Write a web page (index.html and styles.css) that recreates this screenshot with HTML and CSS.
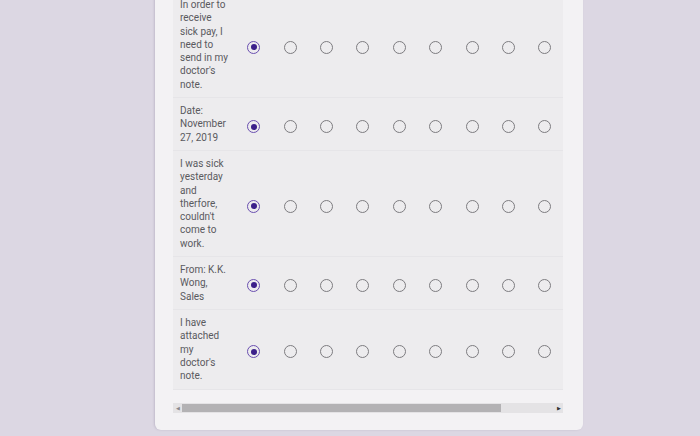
FILE: index.html
```html
<!DOCTYPE html>
<html lang="en">
<head>
    <meta charset="UTF-8">
    <title>Grid question</title>
    <link rel="stylesheet" href="styles.css">
</head>
<body>
    <div class="card">
        <div class="grid">
            <div class="row">
                <div class="label">In order to<br>receive<br>sick pay, I<br>need to<br>send in my<br>doctor's<br>note.</div>
                <div class="radios">
                    <span class="radio on"></span><span class="radio"></span><span class="radio"></span>
                    <span class="radio"></span><span class="radio"></span><span class="radio"></span>
                    <span class="radio"></span><span class="radio"></span><span class="radio"></span>
                </div>
            </div>
            <div class="row">
                <div class="label">Date:<br>November<br>27, 2019</div>
                <div class="radios">
                    <span class="radio on"></span><span class="radio"></span><span class="radio"></span>
                    <span class="radio"></span><span class="radio"></span><span class="radio"></span>
                    <span class="radio"></span><span class="radio"></span><span class="radio"></span>
                </div>
            </div>
            <div class="row">
                <div class="label">I was sick<br>yesterday<br>and<br>therfore,<br>couldn't<br>come to<br>work.</div>
                <div class="radios">
                    <span class="radio on"></span><span class="radio"></span><span class="radio"></span>
                    <span class="radio"></span><span class="radio"></span><span class="radio"></span>
                    <span class="radio"></span><span class="radio"></span><span class="radio"></span>
                </div>
            </div>
            <div class="row">
                <div class="label">From: K.K.<br>Wong,<br>Sales</div>
                <div class="radios">
                    <span class="radio on"></span><span class="radio"></span><span class="radio"></span>
                    <span class="radio"></span><span class="radio"></span><span class="radio"></span>
                    <span class="radio"></span><span class="radio"></span><span class="radio"></span>
                </div>
            </div>
            <div class="row">
                <div class="label">I have<br>attached<br>my<br>doctor's<br>note.</div>
                <div class="radios">
                    <span class="radio on"></span><span class="radio"></span><span class="radio"></span>
                    <span class="radio"></span><span class="radio"></span><span class="radio"></span>
                    <span class="radio"></span><span class="radio"></span><span class="radio"></span>
                </div>
            </div>
        </div>
        <div class="scrollbar">
            <span class="arrow arrow-l">&#9664;</span>
            <div class="track"><div class="thumb"></div></div>
            <span class="arrow arrow-r">&#9654;</span>
        </div>
    </div>
</body>
</html>
```

FILE: styles.css
```css
*{ margin: 0; padding: 0; box-sizing: border-box; }

body{
    background: #dcd7e3;
    font-family: Roboto, "Liberation Sans", sans-serif;
    height: 436px;
    overflow: hidden;
}

.card{
    width: 428px;
    margin: -8px 0 0 155px;
    background: #f3f2f4;
    border-radius: 0 0 6px 6px;
    box-shadow: -1px 0 2px rgba(120, 110, 140, .25);
    padding: 0 20px 17px 18px;
}

.row{
    display: flex;
    align-items: center;
    background: #edecee;
    border-bottom: 1px solid #e6e5e8;
    padding: 6px 0 6px 7px;
}
.row:last-child{ padding-bottom: 7px; }

.label{
    width: 57px;
    font-size: 10px;
    line-height: 13.3px;
    color: #5a5a5e;
}

.radios{
    display: grid;
    grid-template-columns: repeat(9, 36.4px);
    justify-items: center;
    padding-top: 5px;
}

.radio{
    width: 13px;
    height: 13px;
    border: 1.5px solid #7d7c80;
    border-radius: 50%;
    display: flex;
    align-items: center;
    justify-content: center;
}

.radio.on{
    border-color: #6a4fb0;
}
.radio.on::after{
    content: "";
    width: 6px;
    height: 6px;
    border-radius: 50%;
    background: #3b1f8a;
}

.scrollbar{
    display: flex;
    align-items: center;
    height: 10px;
    margin-top: 13px;
    background: #e4e3e5;
}
.arrow{
    font-size: 5px;
    width: 9px;
    text-align: center;
    color: #8a898c;
}
.arrow-r{ color: #333; }
.track{
    flex: 1;
    height: 10px;
    display: flex;
    align-items: center;
}
.thumb{
    width: 319px;
    height: 8px;
    background: #b3b2b4;
}
```
